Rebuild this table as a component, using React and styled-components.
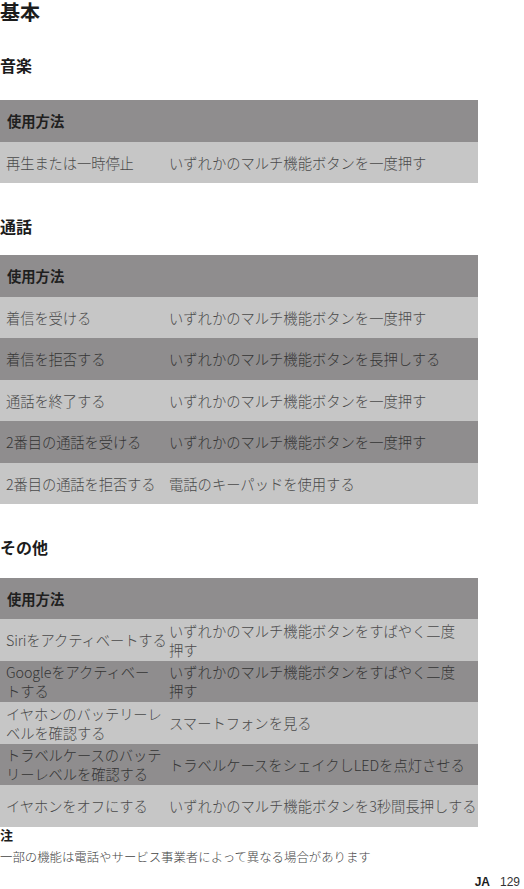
import React from 'react';
import styled, { createGlobalStyle } from 'styled-components';

const Global = createGlobalStyle`
  html, body { margin: 0; padding: 0; background: #ffffff; }
  body {
    font-family: "Noto Sans CJK JP", "Noto Sans", sans-serif;
    color: #444444;
  }
`;

const Page = styled.div`
  width: 524px;
  height: 889px;
  overflow: hidden;
  display: flex;
  flex-direction: column;
`;

const Title = styled.h1`
  margin: 0;
  font-size: 20px;
  line-height: 24px;
  font-weight: 700;
  color: #1c1c1c;
`;

const SectionTitle = styled.h2`
  margin: ${(p) => p.$mt}px 0 ${(p) => p.$mb}px;
  font-size: 16px;
  line-height: 20px;
  font-weight: 700;
  color: #1c1c1c;
`;

const Table = styled.div`
  width: 478px;
  display: flex;
  flex-direction: column;
`;

const HeaderRow = styled.div`
  height: 41.5px;
  flex: none;
  display: flex;
  align-items: center;
  padding-left: 7px;
  background: #8f8d8e;
  font-size: 14.3px;
  font-weight: 700;
  color: #1f1f1f;
`;

const Row = styled.div`
  height: 41.5px;
  flex: none;
  display: grid;
  grid-template-columns: 169px 1fr;
  align-items: center;
  background: ${(p) => (p.$dark ? '#8f8d8e' : '#c6c6c6')};
  font-size: 14.3px;
  font-weight: 300;
  line-height: 19px;
  color: ${(p) => (p.$dark ? '#353535' : '#4a4a4a')};
`;

const LabelCell = styled.div`
  padding-left: 6px;
  white-space: pre;
  letter-spacing: -0.1px;
`;

const ActionCell = styled.div`
  white-space: pre;
`;

const NoteLabel = styled.div`
  font-size: 13px;
  line-height: 16px;
  font-weight: 700;
  color: #1c1c1c;
`;

const NoteText = styled.div`
  margin-top: 6px;
  font-size: 12.4px;
  line-height: 16px;
  font-weight: 300;
  color: #444444;
`;

const PageFooter = styled.div`
  margin-top: 11px;
  display: flex;
  justify-content: flex-end;
  align-items: center;
  gap: 10px;
  padding-right: 4px;
  font-family: "Liberation Sans", Arial, sans-serif;
  font-size: 12px;
  line-height: 12px;
  color: #1c1c1c;
`;

const Lang = styled.span`
  font-weight: 700;
`;

const PageNum = styled.span`
  font-weight: 400;
  color: #333333;
`;

const sections = [
  {
    title: '音楽',
    mt: 31,
    mb: 25,
    rows: [['再生または一時停止', 'いずれかのマルチ機能ボタンを一度押す']],
  },
  {
    title: '通話',
    mt: 33,
    mb: 19,
    rows: [
      ['着信を受ける', 'いずれかのマルチ機能ボタンを一度押す'],
      ['着信を拒否する', 'いずれかのマルチ機能ボタンを長押しする'],
      ['通話を終了する', 'いずれかのマルチ機能ボタンを一度押す'],
      ['2番目の通話を受ける', 'いずれかのマルチ機能ボタンを一度押す'],
      ['2番目の通話を拒否する', '電話のキーパッドを使用する'],
    ],
  },
  {
    title: 'その他',
    mt: 33,
    mb: 20.7,
    rows: [
      ['Siriをアクティベートする', 'いずれかのマルチ機能ボタンをすばやく二度\n押す'],
      ['Googleをアクティベー\nトする', 'いずれかのマルチ機能ボタンをすばやく二度\n押す'],
      ['イヤホンのバッテリーレ\nベルを確認する', 'スマートフォンを見る'],
      ['トラベルケースのバッテ\nリーレベルを確認する', 'トラベルケースをシェイクしLEDを点灯させる'],
      ['イヤホンをオフにする', 'いずれかのマルチ機能ボタンを3秒間長押しする'],
    ],
  },
];

export default function App() {
  return (
    <>
      <Global />
      <Page>
        <Title>基本</Title>
        {sections.map((s) => (
          <React.Fragment key={s.title}>
            <SectionTitle $mt={s.mt} $mb={s.mb}>{s.title}</SectionTitle>
            <Table>
              <HeaderRow>使用方法</HeaderRow>
              {s.rows.map(([label, action], i) => (
                <Row key={label} $dark={i % 2 === 1}>
                  <LabelCell>{label}</LabelCell>
                  <ActionCell>{action}</ActionCell>
                </Row>
              ))}
            </Table>
          </React.Fragment>
        ))}
        <NoteLabel>注</NoteLabel>
        <NoteText>一部の機能は電話やサービス事業者によって異なる場合があります</NoteText>
        <PageFooter>
          <Lang>JA</Lang>
          <PageNum>129</PageNum>
        </PageFooter>
      </Page>
    </>
  );
}
